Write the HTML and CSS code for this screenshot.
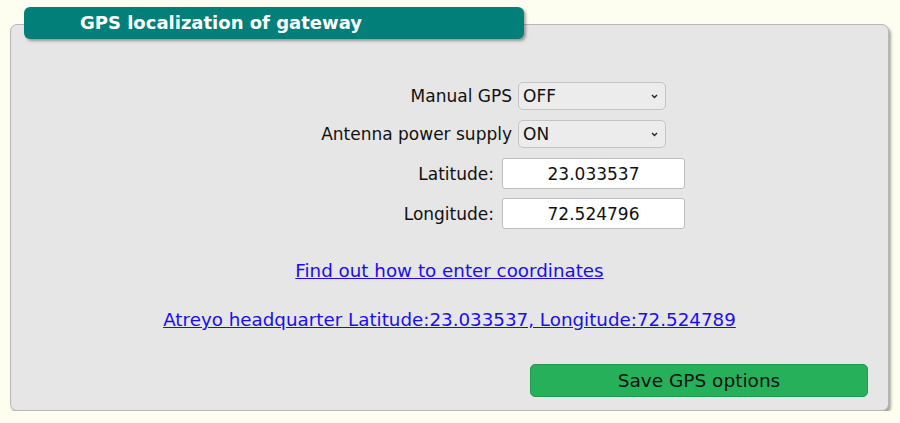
FILE: index.html
```html
<!DOCTYPE html>
<html lang="en">
	<head>
		<meta charset="UTF-8" />
		<meta name="viewport" content="width=device-width, initial-scale=1.0" />
		<title>GPS localization</title>
		<link rel="stylesheet" href="styles.css">
	</head>
	<body>
		<div class="box">
			<div class="box-title">GPS localization of gateway</div>
			<div class="box-body">
				<div class="form-row select-row">
					<label class="form-label" for="manualGps">Manual GPS</label>
					<div class="select-wrap">
						<select id="manualGps" class="form-select">
							<option>OFF</option>
							<option>ON</option>
						</select>
						<svg class="select-arrow" width="7" height="5" viewBox="0 0 7 5">
							<path d="M1 1 L3.5 3.5 L6 1" fill="none" stroke="#222" stroke-width="1.4" />
						</svg>
					</div>
				</div>
				<div class="form-row select-row">
					<label class="form-label" for="antennaPower">Antenna power supply</label>
					<div class="select-wrap">
						<select id="antennaPower" class="form-select">
							<option>ON</option>
							<option>OFF</option>
						</select>
						<svg class="select-arrow" width="7" height="5" viewBox="0 0 7 5">
							<path d="M1 1 L3.5 3.5 L6 1" fill="none" stroke="#222" stroke-width="1.4" />
						</svg>
					</div>
				</div>
				<div class="form-row input-row">
					<label class="form-label" for="latitude">Latitude:</label>
					<input type="text" id="latitude" class="form-input" value="23.033537" />
				</div>
				<div class="form-row input-row">
					<label class="form-label" for="longitude">Longitude:</label>
					<input type="text" id="longitude" class="form-input" value="72.524796" />
				</div>
				<div class="link-row first-link">
					<a href="#">Find out how to enter coordinates</a>
				</div>
				<div class="link-row">
					<a href="#">Atreyo headquarter Latitude:23.033537, Longitude:72.524789</a>
				</div>
				<div class="button-row">
					<button class="save-button">Save GPS options</button>
				</div>
			</div>
		</div>
	</body>
</html>
```

FILE: styles.css
```css
* {
	box-sizing: border-box;
}
body {
	margin: 0;
	padding: 7px 0 0 10px;
	background-color: #fefef0;
	font-family: "DejaVu Sans", Verdana, sans-serif;
	font-size: 17px;
	color: #111;
}
.box {
	width: 879px;
}
.box-title {
	position: relative;
	z-index: 1;
	width: 500px;
	height: 32px;
	margin-left: 14px;
	margin-bottom: -15px;
	padding: 5px 0 0 56px;
	background-color: #037f7a;
	border-radius: 6px;
	box-shadow: 2px 2px 3px rgba(0, 0, 0, 0.35);
	color: white;
	font-weight: bold;
	font-size: 18px;
}
.box-body {
	height: 387px;
	padding-top: 57px;
	background-color: #e6e6e6;
	border: 1px solid #b8b8b8;
	border-radius: 7px;
	box-shadow: 2px 3px 3px rgba(0, 0, 0, 0.35);
}
.form-row {
	display: flex;
	align-items: center;
}
.form-label {
	text-align: right;
}
.select-row {
	height: 28px;
	margin-bottom: 10px;
}
.select-row .form-label {
	width: 507px;
	padding-right: 6px;
}
.select-wrap {
	position: relative;
	width: 148px;
	height: 28px;
}
.form-select {
	appearance: none;
	width: 100%;
	height: 100%;
	padding: 0 4px;
	font-family: inherit;
	font-size: 17px;
	color: #111;
	background-color: #ececec;
	border: 1px solid #c4c4c4;
	border-radius: 5px;
}
.select-arrow {
	position: absolute;
	right: 8px;
	top: 12px;
	pointer-events: none;
}
.input-row {
	height: 31px;
	margin-bottom: 9px;
}
.input-row .form-label {
	width: 491px;
	padding-right: 8px;
}
.form-input {
	width: 183px;
	height: 31px;
	font-family: inherit;
	font-size: 17px;
	text-align: center;
	color: #111;
	background-color: white;
	border: 1px solid #bdbdbd;
	border-radius: 3px;
}
.link-row {
	text-align: center;
	margin-top: 28px;
	font-size: 18.3px;
}
.first-link {
	margin-top: 31px;
}
.link-row a {
	color: #1a0dee;
}
.button-row {
	display: flex;
	justify-content: flex-end;
	margin-top: 34px;
	padding-right: 20px;
}
.save-button {
	width: 338px;
	height: 33px;
	font-family: inherit;
	font-size: 18.5px;
	color: #111;
	background-color: #27b05a;
	border: 1px solid #1f9a4c;
	border-radius: 5px;
}
```
